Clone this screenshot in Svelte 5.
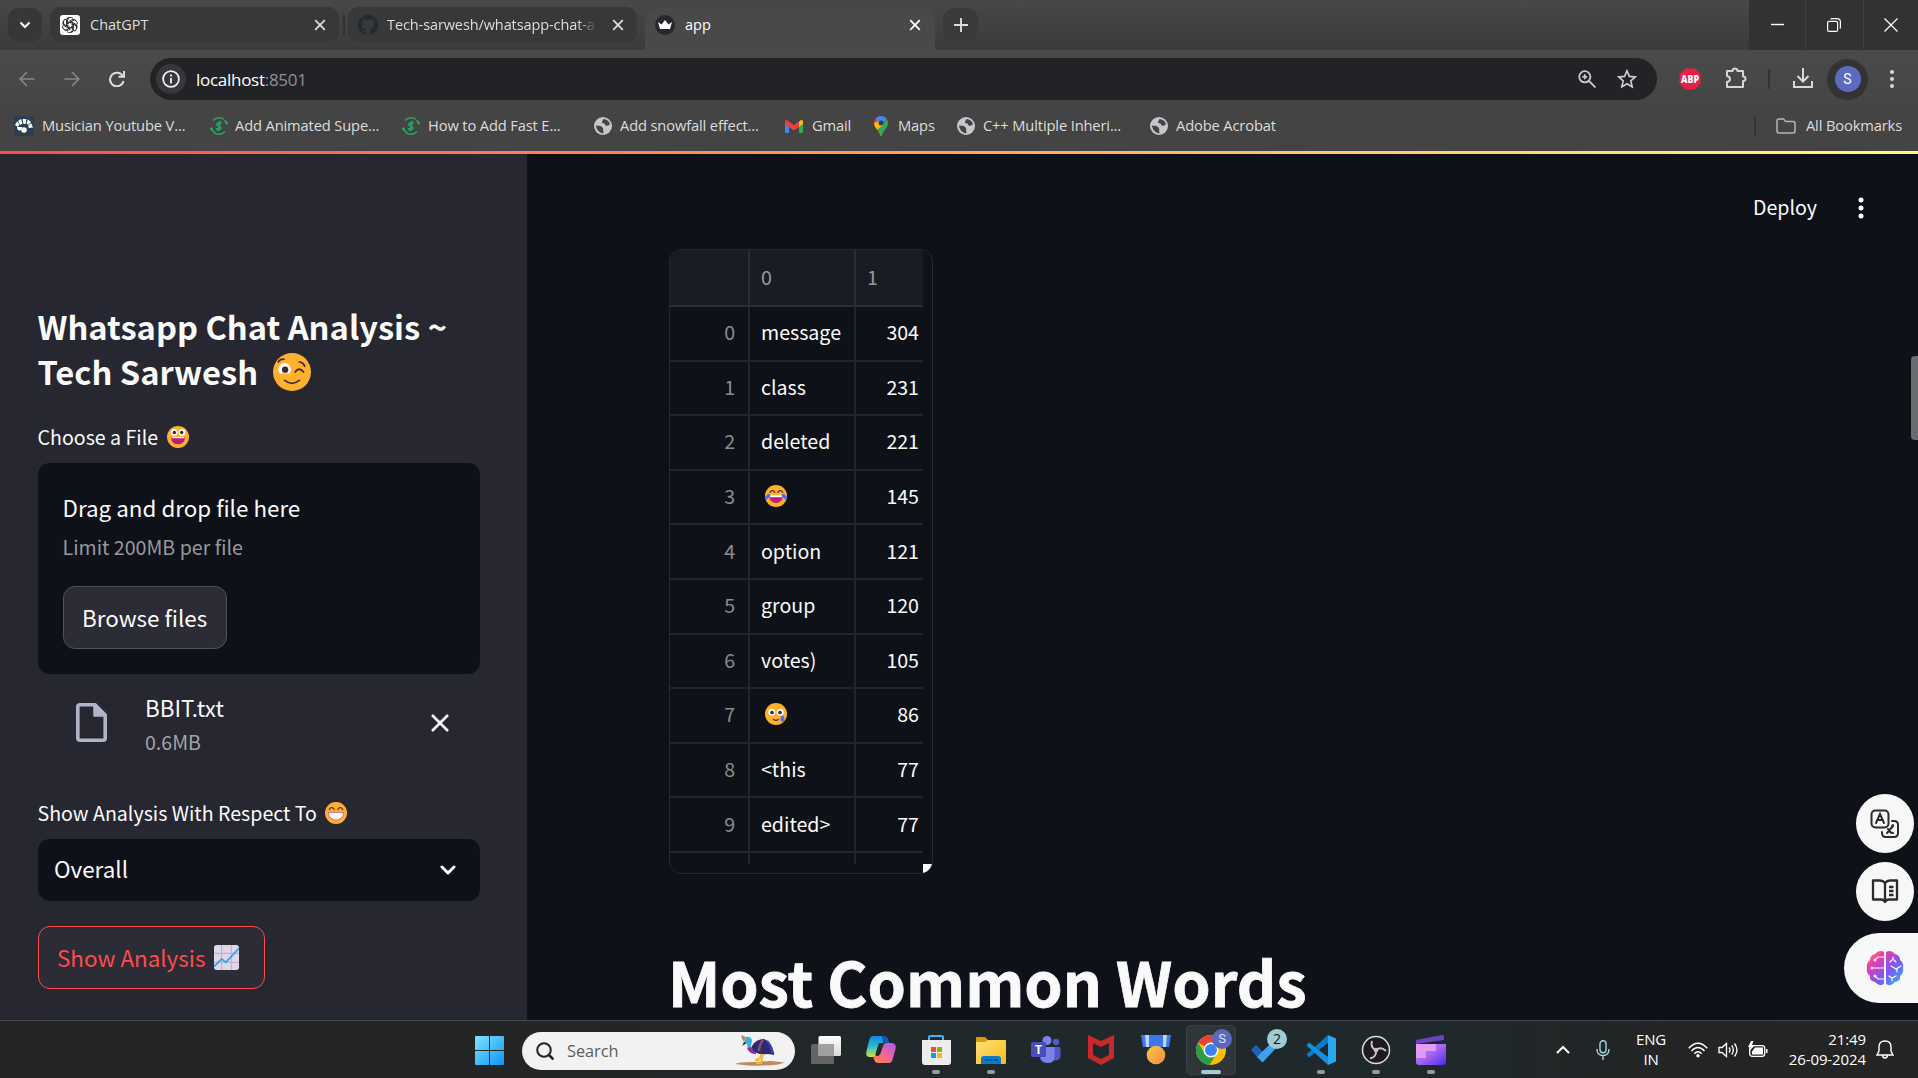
<script>
  const bookmarks = [
    { icon: 'piano', label: 'Musician Youtube V...', width: 195, gap: 8 },
    { icon: 'scurve', label: 'Add Animated Supe...', width: 192, gap: 6 },
    { icon: 'scurve', label: 'How to Add Fast E...', width: 192, gap: 7 },
    { icon: 'globe', label: 'Add snowfall effect...', width: 191, gap: 7 },
    { icon: 'gmail', label: 'Gmail', width: 87, gap: 8 },
    { icon: 'maps', label: 'Maps', width: 85, gap: 7 },
    { icon: 'globe', label: 'C++ Multiple Inheri...', width: 193, gap: 7 },
    { icon: 'globe', label: 'Adobe Acrobat', width: 200, gap: 7 }
  ];
  const rows = [
    ['message', 304],
    ['class', 231],
    ['deleted', 221],
    ['joy', 145],
    ['option', 121],
    ['group', 120],
    ['votes)', 105],
    ['tear', 86],
    ['<this', 77],
    ['edited>', 77]
  ];
  const pinned = ['taskview', 'copilot', 'store', 'folder', 'teams', 'mcafee', 'medal', 'chrome', 'todo', 'vscode', 'obs', 'clipchamp'];
  const running = ['store', 'folder', 'vscode', 'obs', 'clipchamp'];
</script>

{#snippet closeIcon()}
  <svg width="12" height="12" viewBox="0 0 12 12" fill="none" stroke="currentColor" stroke-width="1.800"><path d="M1.200 1.200l9.600 9.600M10.800 1.200l-9.600 9.600" /></svg>
{/snippet}

{#snippet emoji(kind, size)}
  <svg class="emoji" width={size} height={size} viewBox="0 0 36 36" role="img" aria-label={kind}>
    {#if kind === 'chart'}
      <rect width="36" height="36" rx="4" fill="#e0d7ea" />
      <path d="M11 0v36M25 0v36M0 12h36M0 25h36" stroke="#b9acc6" stroke-width="1.400" />
      <path d="M0 31L11 20l6 5L36 5" fill="none" stroke="#39a2ec" stroke-width="2.600" />
    {:else}
      <circle cx="18" cy="18" r="18" fill="#ffb02e" />
      {#if kind === 'wink'}
        <circle cx="11" cy="15.500" r="6" fill="#fff" />
        <circle cx="11.500" cy="15.800" r="3" fill="#402a32" />
        <path d="M5 20.500q6-2.500 12 0v2H5z" fill="#ffb02e" />
        <path d="M5 8.500q2-3 5.500-2.600M25 8.500q4 .5 5 4M21 18q3.500-5.500 8 0M11 26q7 5.500 14 0" fill="none" stroke="#402a32" stroke-width="1.600" stroke-linecap="round" />
      {:else if kind === 'grin'}
        <circle cx="11.500" cy="10.500" r="5.500" fill="#fff" /><circle cx="24.500" cy="10.500" r="5.500" fill="#fff" />
        <circle cx="12" cy="10.500" r="2.800" fill="#402a32" /><circle cx="24" cy="10.500" r="2.800" fill="#402a32" />
        <path d="M7 18h22v3a11 9 0 0 1-22 0z" fill="#bb1d80" /><path d="M8 18h20v2H8z" fill="#fff" />
      {:else if kind === 'beam'}
        <path d="M7 12q4-6 8 0M21 12q4-6 8 0" fill="none" stroke="#402a32" stroke-width="2" stroke-linecap="round" />
        <path d="M6 17h24v2.500a12 10 0 0 1-24 0z" fill="#fff" /><path d="M6 17h24v2.500a12 10 0 0 1-24 0z" fill="none" stroke="#c2458f" stroke-width="1.200" />
      {:else if kind === 'joy'}
        <path d="M8 12q4-6 8 0M21 12q4-6 8 0" fill="none" stroke="#402a32" stroke-width="2" stroke-linecap="round" />
        <path d="M7 18h22v2a11 9.500 0 0 1-22 0z" fill="#bb1d80" /><path d="M8 17h20v3H8z" fill="#fff" />
        <path d="M6 17L2 21M30 17l4 4" stroke="#4a6bf5" stroke-width="5" stroke-linecap="round" />
      {:else if kind === 'tear'}
        <circle cx="11" cy="15" r="5.500" fill="#fff" /><circle cx="25" cy="15" r="5.500" fill="#fff" />
        <circle cx="11.500" cy="15.500" r="3" fill="#402a32" /><circle cx="24.500" cy="15.500" r="3" fill="#402a32" />
        <path d="M14 27q4 3 8 0" fill="none" stroke="#402a32" stroke-width="2" stroke-linecap="round" />
        <rect x="25.500" y="21" width="6" height="10" rx="3" fill="#4a6bf5" />
      {/if}
    {/if}
  </svg>
{/snippet}

{#snippet markIcon(kind)}
  <svg width="20" height="20" viewBox="0 0 20 20">
    {#if kind === 'piano'}
      <rect width="20" height="20" rx="1.500" fill="#2a4052" />
      <path d="M1 9L3 5.500 5.500 8 4 11zM4 5l3-2 1.500 4.500L6.500 9zM8.500 3h4l-1 5h-2zM14 3.500l3 2.500-3 3-1.500-2zM17 7l2 4.500-4 .5-1-2zM3 11q0 4 3.500 3.500L8.500 11z" fill="#fff" /><circle cx="10" cy="14" r="2.800" fill="#fff" />
    {:else if kind === 'scurve'}
      <path d="M15 3.500A8.300 8.300 0 0 0 4 4.500M2 12A8.300 8.300 0 0 0 6 17M5.500 17A8.300 8.300 0 0 0 16 15.500M18 8A8.300 8.300 0 0 0 15.500 4" fill="none" stroke="#23a566" stroke-width="1.500" />
      <path d="M12.600 7.800q-1.800-2-4-.8-1.800 1.700.8 2.900 3.400 1.200 1.900 3.100-2 1.500-4.300-.5M11 4.800l-2 10.500" fill="none" stroke="#23a566" stroke-width="1.700" />
      <circle cx="17.500" cy="7" r="1.500" fill="#23a566" /><circle cx="2.500" cy="13" r="1.500" fill="#23a566" />
    {:else if kind === 'globe'}
      <circle cx="10" cy="10" r="9" fill="#c4c7cc" />
      <path d="M10.500 3q5 .5 6.500 5-1.500 2.500-4.500 1.500l-1-2-2.500-.5.3-2zM2.800 9.500l5 .5 2.200 2 .5 5.500q-6-.5-7.700-8" fill="#444" />
    {:else if kind === 'gmail'}
      <path d="M1 5v12h4V9z" fill="#4285f4" /><path d="M19 5v12h-4V9z" fill="#34a853" /><path d="M15 5.500L17 4q2-.5 2 2v2l-4 3z" fill="#fbbc04" />
      <path d="M5 5.500L3 4Q1 3.500 1 6v2l4 3 5 3.600 5-3.600V5.500l-5 3.800z" fill="#ea4335" />
    {:else if kind === 'maps'}
      <path d="M10 0a7 7 0 0 0-7 7q0 3 2.500 5.500L10 7z" fill="#ea4335" /><path d="M10 0a7 7 0 0 1 6 3.500L10 9 5 2.300A7 7 0 0 1 10 0" fill="#4285f4" />
      <path d="M16 3.500q2 3.500 0 7.500-4 4.500-5.200 9h-1.500q-.8-3-3.300-6.500z" fill="#34a853" /><path d="M3 7q0 3.500 3 6.700L12.500 9 8 5z" fill="#fbbc04" /><circle cx="10" cy="7" r="2.500" fill="#343b57" />
    {/if}
  </svg>
{/snippet}

{#snippet taskIcon(kind)}
  <svg width="32" height="32" viewBox="0 0 32 32">
    {#if kind === 'taskview'}
      <rect x="1" y="10" width="23" height="20" rx="1.500" fill="#646464" /><rect x="8.500" y="2" width="22.500" height="20" rx="1.500" fill="url(#tvw)" /><rect x="8.500" y="10" width="15.500" height="12" fill="#a0a0a0" />
    {:else if kind === 'copilot'}
      <path d="M8 2h11q3 0 4 4l1 3h-4q-3 0-4 3l-3 7q-1 4-4 4H5q-5 0-3.500-6L4 7q1-5 4-5" fill="url(#cpa)" />
      <path d="M24 29H13q-3 0-4-4l-1-3h4q3 0 4-4l2-6q1-3 4-3h5q5 1 3.500 6L28 24q-1 5-4 5" fill="url(#cpb)" />
      <path d="M17 2h2q3 0 4 4l1 3h-6z" fill="#1655b8" /><path d="M14 9h6q-3 0-4 3l-3 10h-2q-1-1 0-4z" fill="#20282b" />
    {:else if kind === 'store'}
      <path d="M9 7V3q0-1 1-1h12q1 0 1 1v4" fill="none" stroke="#39b9ed" stroke-width="2" />
      <path d="M2 6h29v22q0 3-3 3H5q-3 0-3-3z" fill="#ececec" />
      <path d="M11 13h5v5h-5z" fill="#f25022" /><path d="M17 13h5v5h-5z" fill="#7fba00" /><path d="M11 19h5v5h-5z" fill="#00a4ef" /><path d="M17 19h5v5h-5z" fill="#ffb900" />
    {:else if kind === 'folder'}
      <path d="M1 4q0-1 1-1h8l3 3h3v5H1z" fill="#dd9a0a" /><path d="M1 8h9l3-2h17q1 0 1 1v22q0 1-1 1H1z" fill="url(#fol)" />
      <path d="M6 30v-5q0-3 3-3h14q3 0 3 3v5z" fill="#0c7bc8" /><path d="M10 26h13" stroke="#074b86" stroke-width="1.500" />
    {:else if kind === 'teams'}
      <circle cx="17" cy="6.500" r="4.500" fill="#7b83eb" /><circle cx="26" cy="8" r="3.200" fill="#5059c9" />
      <path d="M20 13h9q1.500 0 1.500 1.500v7q0 5-5.500 5-3 0-5-3z" fill="#5059c9" /><path d="M10 13h14.500v10q0 6-7 6-7.500 0-7.500-7z" fill="#7b83eb" />
      <rect x="1" y="8" width="15" height="15" rx="1.500" fill="#464eb8" /><text x="8.500" y="20" text-anchor="middle" font-family="Open Sans, sans-serif" font-size="12" font-weight="700" fill="#fff">T</text>
    {:else if kind === 'mcafee'}
      <path d="M3 1l13 6 13-6v23l-13 7-13-7zM8 9v12l8 4 8-4V9l-8 4z" fill="#c9292c" fill-rule="evenodd" />
    {:else if kind === 'medal'}
      <path d="M1 1h30l-2 12H3z" fill="#3f76ee" /><path d="M5 1h4v12H6zM23 1h4l-1 12h-3z" fill="#b5d8ff" /><circle cx="16" cy="21" r="9.300" fill="url(#med)" />
    {:else if kind === 'chrome'}
      <circle cx="16" cy="16" r="15" fill="#fbbc04" /><path d="M16 16L3 8.500A15 15 0 0 1 29 8.500H16z" fill="#ea4335" /><path d="M3 8.500A15 15 0 0 0 14.500 31L22 19l-6 4-6-3z" fill="#2c9e4b" /><circle cx="16" cy="16" r="7.500" fill="#fff" /><circle cx="16" cy="16" r="6" fill="#3b82f6" />
    {:else if kind === 'todo'}
      <path d="M1 16l5-5 7 7-5 6z" fill="#1f5fc4" /><path d="M7 23L26 4l5 5-18.500 19.500z" fill="#3ea0ef" />
    {:else if kind === 'vscode'}
      <path d="M23 1l8 3.500v23L23 31z" fill="#2aa7ef" /><path d="M23 1L1.500 20.500 4 23.500 23 9z" fill="#0b7bc6" /><path d="M23 31L1.500 11.500 4 8.500 23 23z" fill="#1490df" />
    {:else if kind === 'obs'}
      <circle cx="16" cy="16" r="13.500" fill="#1d1b1e" stroke="#dedede" stroke-width="1.500" />
      <path d="M16 16q-6-2-4-9M16 16q5-4 10 1M16 16q1 7-6 8.500" fill="none" stroke="#c5c3c5" stroke-width="2" /><circle cx="16" cy="16" r="2.300" fill="#c5c3c5" />
    {:else if kind === 'clipchamp'}
      <path d="M1 6l26-5q2 0 2 2v3L1 10z" fill="#6a43c7" /><path d="M1 10h30v18q0 3-3 3H4q-3 0-3-3z" fill="url(#clip)" /><path d="M1 10h20v7H1z" fill="#e69bf3" /><path d="M1 17h10v7H1z" fill="#dc9af4" />
    {/if}
  </svg>
{/snippet}

<svg class="defs" width="0" height="0" aria-hidden="true">
  <defs>
    <linearGradient id="tvw" x2="0" y2="1"><stop stop-color="#fff" /><stop offset="1" stop-color="#d8d8d8" /></linearGradient>
    <linearGradient id="cpa" x2="0" y2="1"><stop stop-color="#1683dd" /><stop offset=".5" stop-color="#27bfd0" /><stop offset="1" stop-color="#d6dd33" /></linearGradient>
    <linearGradient id="cpb" x1="1" x2="0" y2="1"><stop stop-color="#a45cf0" /><stop offset=".5" stop-color="#f0639d" /><stop offset="1" stop-color="#ff8a35" /></linearGradient>
    <linearGradient id="fol" x2="1" y2="1"><stop stop-color="#ffe27a" /><stop offset="1" stop-color="#fbb917" /></linearGradient>
    <linearGradient id="med" x2="1" y2="1"><stop stop-color="#ffc83d" /><stop offset="1" stop-color="#f28a4b" /></linearGradient>
    <linearGradient id="clip" x2="1" y2="1"><stop stop-color="#d084f1" /><stop offset=".5" stop-color="#a565ee" /><stop offset="1" stop-color="#4b2bea" /></linearGradient>
    <linearGradient id="win" x2="1" y2="1"><stop stop-color="#7be6ff" /><stop offset="1" stop-color="#0f94f5" /></linearGradient>
    <linearGradient id="brain" x2="1" y2="1"><stop stop-color="#ffae19" /><stop offset=".25" stop-color="#f536ae" /><stop offset=".6" stop-color="#7759f3" /><stop offset="1" stop-color="#2db9fb" /></linearGradient>
  </defs>
</svg>

<div class="screen">
  <div class="tabstrip">
    <div class="tabsearch"><svg width="12" height="12" viewBox="0 0 12 12" fill="none" stroke="#fff" stroke-width="2.200"><path d="M1.500 3.500L6 8l4.500-4.500" /></svg></div>
    <div class="tab first">
      <svg width="20" height="20" viewBox="0 0 20 20"><rect width="20" height="20" rx="3" fill="#fff" />
        <g fill="none" stroke="#222" stroke-width=".9">{#each [0, 60, 120, 180, 240, 300] as a}<path d="M7.500 9.500V5.500a3.200 3.200 0 0 1 5.600-2M8.400 9.200V6.800l3.500-2q2.800-1.300 4.300 1" transform="rotate({a} 10 10)" />{/each}</g></svg>
      <span class="title">ChatGPT</span><span class="x">{@render closeIcon()}</span>
    </div>
    <div class="tabsep"></div>
    <div class="tab second">
      <svg width="20" height="20" viewBox="0 0 16 16"><path fill="#22292f" d="M8 0C3.580 0 0 3.580 0 8c0 3.540 2.290 6.530 5.470 7.590.4.070.55-.17.55-.38v-1.490c-2.010.37-2.530-.49-2.690-.94-.09-.23-.48-.94-.82-1.130-.28-.15-.68-.52-.01-.53.63-.01 1.080.58 1.230.82.72 1.210 1.870.87 2.330.66.070-.52.28-.87.51-1.070-1.780-.2-3.640-.89-3.640-3.950 0-.87.31-1.590.82-2.150-.08-.2-.36-1.020.08-2.120 0 0 .67-.21 2.200.82a7.600 7.600 0 0 1 4 0c1.530-1.040 2.200-.82 2.200-.82.44 1.100.16 1.920.08 2.120.51.56.82 1.270.82 2.150 0 3.070-1.870 3.750-3.650 3.950.29.25.54.73.54 1.480v2.190c0 .21.150.46.55.38A8 8 0 0 0 8 0z" /></svg>
      <span class="title fade">Tech-sarwesh/whatsapp-chat-an</span><span class="x">{@render closeIcon()}</span>
    </div>
    <div class="tab active">
      <svg width="20" height="20" viewBox="0 0 20 20"><circle cx="10" cy="10" r="10" fill="#262730" /><path d="M3 7l3.500 2.500L10 5l3.500 4.500L17 7l-2 7H5z" fill="#fff" /></svg>
      <span class="title">app</span><span class="x">{@render closeIcon()}</span>
    </div>
    <div class="newtab"><svg width="14" height="14" viewBox="0 0 14 14" stroke="#ddd" stroke-width="1.900"><path d="M7 0v14M0 7h14" /></svg></div>
    <div class="winbtns">
      <div><svg width="14" height="14" viewBox="0 0 14 14" stroke="#fff" stroke-width="1.400"><path d="M1 6.500h13" /></svg></div>
      <div><svg width="14" height="14" viewBox="0 0 14 14" fill="none" stroke="#fff" stroke-width="1.200"><rect x=".6" y="3.400" width="10" height="10" rx="1.500" /><path d="M3.500 1Q4 .6 5 .6h5q3.400 0 3.400 3.400v5q0 1-.5 1.500" /></svg></div>
      <div><svg width="14" height="14" viewBox="0 0 14 14" stroke="#fff" stroke-width="1.200"><path d="M.5.5l13 13M13.500.5l-13 13" /></svg></div>
    </div>
  </div>

  <div class="toolbar">
    <div class="nav">
      <svg width="16" height="16" viewBox="0 0 16 16" fill="none" stroke="#868686" stroke-width="1.700"><path d="M15.500 8H1.500M8 1L1.200 8 8 15" /></svg>
      <svg width="16" height="16" viewBox="0 0 16 16" fill="none" stroke="#868686" stroke-width="1.700"><path d="M.5 8h14M8 1l6.800 7L8 15" /></svg>
      <svg width="16" height="16" viewBox="0 0 16 16" fill="none" stroke="#ddd" stroke-width="2"><path d="M14 5.500A6.800 6.800 0 1 0 14.500 10M15 0v5.700H9.500" /></svg>
    </div>
    <div class="omnibox">
      <div class="info"><svg width="18" height="18" viewBox="0 0 18 18" fill="none" stroke="#eee" stroke-width="1.800"><circle cx="9" cy="9" r="7.900" /><path d="M9 8v5.500M9 4.500v2" /></svg></div>
      <span class="url">localhost<i>:8501</i></span>
      <svg class="lens" width="18" height="18" viewBox="0 0 18 18" fill="none" stroke="#c8cacc" stroke-width="1.800"><circle cx="6.800" cy="6.800" r="5.600" /><path d="M11 11l6.500 6.500M6.800 4.300v5M4.300 6.800h5" /></svg>
      <svg width="20" height="20" viewBox="0 0 20 20" fill="none" stroke="#d0d2d4" stroke-width="1.600"><path d="M10 1.800l2.400 5.600 6 .5-4.600 4 1.400 6L10 14.700 4.800 17.900l1.400-6-4.600-4 6-.5z" /></svg>
    </div>
    <div class="abp"><svg width="22" height="22" viewBox="0 0 22 22"><path d="M6.500.5h9l6 6v9l-6 6h-9l-6-6v-9z" fill="#ed1e45" /><text x="11" y="15" text-anchor="middle" font-family="Open Sans, sans-serif" font-size="10.500" font-weight="800" fill="#fff" textLength="18" lengthAdjust="spacingAndGlyphs">ABP</text></svg></div>
    <svg class="puzzle" width="22" height="22" viewBox="0 0 22 22" fill="none" stroke="#d5d5d5" stroke-width="2" stroke-linejoin="round"><path d="M2 4h5.500q0-2.500 2.500-2.500T12.500 4H18v5.500q2.500 0 2.500 2.300T18 14v6H2v-5q3-.5 3-3t-3-3z" /></svg>
    <div class="tsep"></div>
    <svg class="dl" width="20" height="20" viewBox="0 0 20 20" fill="none" stroke="#d8d8d8" stroke-width="2"><path d="M10 0v13M4.500 8l5.500 5.500L15.500 8M1 13v6h18v-6" /></svg>
    <div class="profile"><span>S</span></div>
    <svg class="kebab" width="4" height="18" viewBox="0 0 4 18" fill="#d8d8d8"><circle cx="2" cy="2" r="2" /><circle cx="2" cy="9" r="2" /><circle cx="2" cy="16" r="2" /></svg>
  </div>

  <div class="bookmarks">
    {#each bookmarks as b}
      <div class="bm" style="width:{b.width}px;gap:{b.gap}px">{@render markIcon(b.icon)}<span>{b.label}</span></div>
    {/each}
    <div class="allbm">
      <svg width="20" height="16" viewBox="0 0 20 16" fill="none" stroke="#b5b5b5" stroke-width="1.500"><path d="M1 3q0-2 2-2h4.500l2.300 2.500H17q2 0 2 2V13q0 2-2 2H3q-2 0-2-2z" /></svg>
      <span>All Bookmarks</span>
    </div>
  </div>

  <div class="rainbow"></div>

  <div class="page">
    <aside>
      <h1>Whatsapp Chat Analysis ~<br />Tech Sarwesh {@render emoji('wink', 38)}</h1>
      <div class="label one">Choose a File {@render emoji('grin', 22)}</div>
      <div class="uploader">
        <div class="drag">Drag and drop file here</div>
        <div class="limit">Limit 200MB per file</div>
        <button class="browse">Browse files</button>
      </div>
      <div class="file">
        <svg class="doc" width="31" height="39" viewBox="0 0 31 39" fill="none" stroke="#b0b4c8" stroke-width="3.600" stroke-linejoin="round"><path d="M4 1.800h15L29.200 12v23q0 2.200-2.200 2.200H4q-2.200 0-2.200-2.200V4Q1.800 1.800 4 1.800z" /><path d="M18 2v11h11z" fill="#b0b4c8" stroke-width="1.500" /></svg>
        <div class="fmeta"><div class="fname">BBIT.txt</div><div class="fsize">0.6MB</div></div>
        <svg width="18" height="18" viewBox="0 0 18 18" stroke="#fff" stroke-width="2.500"><path d="M1 1l16 16M17 1L1 17" /></svg>
      </div>
      <div class="label two">Show Analysis With Respect To {@render emoji('beam', 22)}</div>
      <div class="select"><span>Overall</span><svg width="16" height="11" viewBox="0 0 16 11" fill="none" stroke="#fff" stroke-width="3" stroke-linecap="round" stroke-linejoin="round"><path d="M2 2l6 6 6-6" /></svg></div>
      <button class="show"><span>Show Analysis</span>{@render emoji('chart', 25)}</button>
    </aside>

    <main>
      <header><span>Deploy</span><svg width="6" height="22" viewBox="0 0 6 22" fill="#fff"><circle cx="3" cy="3" r="2.500" /><circle cx="3" cy="11" r="2.500" /><circle cx="3" cy="19" r="2.500" /></svg></header>
      <div class="table">
        <div class="cells">
          <div class="row head"><div></div><div>0</div><div>1</div></div>
          {#each rows as [word, count], i}
            <div class="row">
              <div class="idx">{i}</div>
              <div class="word">{#if word === 'joy' || word === 'tear'}{@render emoji(word, 22)}{:else}{word}{/if}</div>
              <div class="num">{count}</div>
            </div>
          {/each}
          <div class="row rest"><div></div><div></div><div></div></div>
        </div>
        <div class="corner"></div>
      </div>
      <h2>Most Common Words</h2>

      <div class="scroll"></div>
      <div class="floats">
        <div class="round"><svg width="30" height="30" viewBox="0 0 30 30" fill="none" stroke="#2b2b2b" stroke-width="2" stroke-linecap="round"><rect x="1.500" y="1.500" width="17" height="17" rx="4" /><path d="M6 14l4-9 4 9M7.500 11h5M22 12h2q4 0 4 4v8q0 4-4 4h-8q-4 0-4-4v-1M17 24l6-7M18 20q2 4 5 4M22 17l1-1" /></svg></div>
        <div class="round"><svg width="28" height="26" viewBox="0 0 28 26" fill="none" stroke="#2b2b2b" stroke-width="2.300" stroke-linejoin="round"><path d="M14 4q-2-2.500-5-2.500H2v19h8q3 0 4 2.500 1-2.500 4-2.500h8v-19h-7Q16 1.500 14 4v18M18 8h4.500M18 12h4.500M18 16h4.500" /></svg></div>
        <div class="pill"><svg width="38" height="36" viewBox="0 0 38 36"><path d="M18 2v32q-5 3-9-2-6-1-5-6-4-3-3-8-1-5 3-8 0-5 5-6 4-5 9-2zM20 2v32q5 3 9-2 6-1 5-6 4-3 3-8 1-5-3-8 0-5-5-6-4-5-9-2z" fill="url(#brain)" /><path d="M18 7h-6l-3 3M18 18H6M18 29h-6l-3-3M24 12l3-3 3 3M27 9V7M25 16l5 3 5-3M31 19v3M23 26l3 2 4-2M26 28v3" fill="none" stroke="#fff" stroke-width="1.200" stroke-linecap="round" /><circle cx="9" cy="10" r="1.500" fill="#fff" /><circle cx="6" cy="18" r="1.500" fill="#fff" /><circle cx="9" cy="26" r="1.500" fill="#fff" /></svg></div>
      </div>
    </main>
  </div>

  <div class="taskbar">
    <svg class="start" width="29" height="29" viewBox="0 0 29 29" fill="url(#win)"><path d="M1 0h13v14H0V1q0-1 1-1zM15 0h13q1 0 1 1v13H15zM0 15h14v14H1q-1 0-1-1zM15 15h14v13q0 1-1 1H15z" /></svg>
    <div class="search">
      <svg width="18" height="18" viewBox="0 0 18 18" fill="none" stroke="#222" stroke-width="2"><circle cx="8" cy="8" r="6.800" /><path d="M13 13l4.500 4.500" stroke-width="2.600" /></svg>
      <span>Search</span>
      <svg width="50" height="31" viewBox="0 0 50 31">
        <path d="M0 29q3-2 18-2l18-1 14 1.500-7 2q-12 1.500-30 1z" fill="#c1895c" />
        <path d="M14 12q2 5 7 5" fill="none" stroke="#9a2f9c" stroke-width="4.500" />
        <path d="M11 2q4-1 6 3 0 4-2 8l-3-2q1-4-3-3z" fill="#33b4dc" />
        <path d="M6 0l5 2-2 5-2-3z" fill="#b98a66" /><path d="M7 11l2-4 3 1z" fill="#2c3450" />
        <path d="M17 11q4-7 12-7 8 3 10 14v2q-3-1-7-1-8 1-12-2-4-3-3-6z" fill="#2c2a72" />
        <path d="M28 5q-4 5-4 11" stroke="#8c4c66" stroke-width="2.500" fill="none" /><path d="M32 6q4 4 5 12" stroke="#2f46c0" stroke-width="2" fill="none" />
        <path d="M26 19l-1 4-4 2M28 19l-2 9M21 28h6M20 25h4" fill="none" stroke="#f1b72c" stroke-width="1.800" />
      </svg>
    </div>
    <div class="apps">
      {#each pinned as p}
        <div class="app" class:current={p === 'chrome'}>
          {@render taskIcon(p)}
          {#if running.includes(p)}<i class="dot"></i>{/if}
          {#if p === 'chrome'}<i class="dot wide"></i><b class="badge s">S</b>{/if}
          {#if p === 'todo'}<b class="badge">2</b>{/if}
        </div>
      {/each}
    </div>
    <div class="tray">
      <svg class="up" width="14" height="9" viewBox="0 0 14 9" fill="none" stroke="#fff" stroke-width="2"><path d="M1 8l6-6 6 6" /></svg>
      <svg class="mic" width="14" height="20" viewBox="0 0 14 20" fill="none" stroke="#a5d4de" stroke-width="1.400"><rect x="4" y=".8" width="6" height="12" rx="3" /><path d="M1 9q0 6.500 6 6.500T13 9M7 15.500V20" /></svg>
      <div class="lang">ENG<br />IN</div>
      <svg class="wifi" width="20" height="16" viewBox="0 0 20 16" fill="none" stroke="#fff" stroke-width="1.400"><path d="M.7 6.200q9.300-10 18.600 0M3.500 9q6.500-7 13 0M6.300 11.800q3.700-4 7.400 0" /><circle cx="10" cy="13.700" r="1.700" fill="#fff" stroke="none" /></svg>
      <svg class="vol" width="21" height="16" viewBox="0 0 21 16" fill="none" stroke="#fff" stroke-width="1.300"><path d="M1 5.500h3L8.500 1.500v13L4 10.500H1zM11 5.500q2 2.500 0 5M13.700 3.500q3.300 4.500 0 9M16.500 1.500q5 6.500 0 13" /></svg>
      <svg class="bat" width="20" height="17" viewBox="0 0 20 17"><rect x="1.700" y="4.700" width="15" height="10.600" rx="2.500" fill="none" stroke="#fff" stroke-width="1.300" /><path d="M7 6.500h8v7H4v-3zM18 8h1.500v4H18zM3 0L0 6h2.500L1.500 10 7 4H4l1.500-4z" fill="#fff" /></svg>
      <div class="clock">21:49<br />26-09-2024</div>
      <svg class="bell" width="18" height="19" viewBox="0 0 18 19" fill="none" stroke="#fff" stroke-width="1.400"><path d="M9 1q6 0 6 6v4l2 4H1l2-4V7q0-6 6-6zM6.500 15.500q.5 2.500 2.500 2.500t2.500-2.500" /></svg>
    </div>
  </div>
</div>

<style>
  :global(body) { background: #0e1117; overflow: hidden; }
  .defs { position: absolute; }
  .screen { width: 1918px; height: 1078px; overflow: hidden; display: flex; flex-direction: column; font-family: 'Open Sans', 'Noto Sans', sans-serif; color: #ddd; }
  .screen * { box-sizing: border-box; }
  svg { display: block; flex: none; }

  .tabstrip { height: 50px; flex: none; display: flex; align-items: flex-start; padding-left: 8px; background: linear-gradient(#484848, #3b3b3b); font-size: 14.500px; }
  .tabsearch { width: 34px; height: 34px; margin: 8px 8px 0 0; border-radius: 11px; background: #373737; display: grid; place-items: center; }
  .tab { display: flex; align-items: center; height: 35px; margin-top: 7px; border-radius: 11px; background: #383838; }
  .tab.first { width: 289px; padding: 0 13px 0 10px; }
  .tab.second { width: 289px; padding: 0 13px 0 10px; }
  .tab.active { width: 290px; height: 42px; margin: 8px 0 0 8px; padding: 0 14px 8px 10px; border-radius: 12px 12px 0 0; background: #494949; color: #fff; }
  .title { flex: 1; margin-left: 10px; white-space: nowrap; overflow: hidden; line-height: 24px; }
  .fade { margin: 0 9px 0 9px; letter-spacing: -.1px; -webkit-mask-image: linear-gradient(90deg, #000 88%, transparent 97%); mask-image: linear-gradient(90deg, #000 88%, transparent 97%); }
  .tabsep { width: 2px; height: 20px; margin: 15px 3px 0 4px; background: #303030; }
  .newtab { width: 35px; height: 34px; margin: 8px 0 0 8px; border-radius: 12px; background: #3a3a3a; display: grid; place-items: center; }
  .winbtns { margin-left: auto; display: flex; height: 50px; background: #323232; }
  .winbtns div { width: 58px; border-right: 1px solid #3f3f3f; display: grid; place-items: center; padding-right: 1px; }
  .winbtns div:first-child { width: 57px; padding-right: 0; }
  .winbtns div:last-child { width: 54px; border: 0; padding: 0; }

  .toolbar { height: 58px; flex: none; display: flex; align-items: center; background: linear-gradient(#4a4a4a, #454545); }
  .nav { display: flex; gap: 29px; padding-left: 19px; width: 150px; }
  .omnibox { width: 1507px; height: 42px; border-radius: 21px; background: #222327; display: flex; align-items: center; padding: 0 20px 0 6px; }
  .info { width: 30px; height: 30px; border-radius: 50%; background: #37383b; display: grid; place-items: center; }
  .url { flex: 1; margin-left: 10px; color: #fff; font-size: 17px; letter-spacing: -.28px; }
  .url i { font-style: normal; color: #8e9195; }
  .lens { margin-right: 21px; }
  .abp { margin-left: 22px; }
  .puzzle { margin-left: 24px; margin-top: -3px; }
  .tsep { width: 2px; height: 20px; margin-left: 21px; background: #343434; }
  .dl { margin-left: 23px; margin-top: -2px; }
  .profile { width: 41px; height: 41px; margin-left: 14px; border-radius: 50%; background: #333; display: grid; place-items: center; }
  .profile span { width: 26px; height: 26px; border-radius: 50%; background: #5c6bc0; color: #fff; font: 14px/26px Roboto, sans-serif; text-align: center; }
  .kebab { margin-left: 22px; }

  .bookmarks { height: 43px; flex: none; display: flex; align-items: center; padding: 0 16px 7px 14px; background: #444; font-size: 14.700px; letter-spacing: -.14px; }
  .bm { display: flex; align-items: center; white-space: nowrap; color: #dcdcdc; }
  .bm span, .allbm span { margin-top: -2px; }
  .allbm { margin-left: auto; display: flex; align-items: center; gap: 10px; padding-left: 20px; height: 20px; border-left: 2px solid #363636; white-space: nowrap; }

  .rainbow { height: 3px; flex: none; background: linear-gradient(90deg, #ff4b4b, #fffd80); }
  .page { height: 866px; flex: none; display: flex; font-family: 'Noto Sans CJK SC', 'Noto Sans', sans-serif; color: #fafafa; }
  aside { width: 527px; padding: 149px 47px 0 37.500px; background: #262730; }
  h1 { margin: 0; font-size: 32.700px; line-height: 45px; font-weight: 600; white-space: nowrap; }
  .emoji { display: inline-block; }
  h1 .emoji { vertical-align: -6px; margin-left: 7px; }
  .label { font-size: 19.600px; line-height: 30px; height: 30px; white-space: nowrap; }
  .label .emoji { vertical-align: -3px; margin-left: 4px; }
  .one { margin-top: 29px; }
  .two { margin-top: 42px; }
  .uploader { height: 211px; margin: 11px 0 0 .5px; border-radius: 12px; padding: 25px 25px 0; background: #0e1117; }
  .drag { font-size: 22.400px; line-height: 38px; margin-left: -.5px; }
  .limit { margin: 5px 0 0 -.5px; font-size: 19.600px; line-height: 32px; color: #98999c; }
  button { display: flex; align-items: center; font: 22.400px/32px 'Noto Sans CJK SC', 'Noto Sans', sans-serif; color: #fafafa; background: #2b2c36; height: 63px; border-radius: 12px; white-space: nowrap; padding: 0 18px; }
  .browse { width: 164px; margin-top: 23px; padding-bottom: 2px; border: 1px solid #515259; }
  .show { width: 227px; margin: 25px 0 0 .5px; border: 1px solid #ff4b4b; color: #ff4b4b; gap: 9px; }
  .show span { margin-top: -2px; }
  .file { height: 66px; margin-top: 16px; padding: 0 31px 0 38.500px; display: flex; align-items: center; }
  .doc { margin-top: -2px; }
  .fmeta { flex: 1; margin: 3px 0 0 38px; }
  .fname { font-size: 22.400px; line-height: 34px; }
  .fsize { font-size: 19.600px; line-height: 34px; margin-top: 1px; color: #a2a3a7; }
  .select { height: 62px; margin: 11px 0 0 .5px; border-radius: 12px; background: #0e1117; padding: 0 24px 2px 16px; display: flex; align-items: center; justify-content: space-between; font-size: 22.400px; line-height: 34px; }
  .select span { margin-top: -3px; }
  .select svg { margin-top: 2px; }

  main { flex: 1; position: relative; background: #0e1117; padding-left: 142px; }
  header { height: 95px; padding: 13px 54px 0 0; display: flex; align-items: center; justify-content: flex-end; gap: 41px; font-size: 19.600px; }
  header span { margin-top: -3px; }
  .table { position: relative; width: 264px; height: 625px; border: 1px solid #25272c; border-radius: 12px; overflow: hidden; }
  .cells { width: 253px; height: 614px; overflow: hidden; font-size: 19.600px; line-height: 28px; }
  .row { display: grid; grid-template-columns: 80px 106px 1fr; height: 54.600px; }
  .row > div { display: flex; align-items: center; padding: 0 4px 2px 11px; border-bottom: 2px solid #232529; border-right: 2px solid #232429; }
  .row > div:last-child { border-right: 0; }
  .row .idx { justify-content: flex-end; padding-right: 13px; color: #8b8c90; }
  .row .num { justify-content: flex-end; }
  .row .emoji { margin-left: 4px; }
  .row.head { height: 57px; background: #1a1c23; color: #97989c; }
  .row.head > div { border-color: #2c2d34; }
  .corner { position: absolute; right: 0; bottom: 0; width: 9px; height: 9px; background: #fff; }
  h2 { margin: 67px 0 0 -1px; font-size: 61.400px; line-height: 80px; font-weight: 700; white-space: nowrap; -webkit-text-stroke: .8px #fafafa; }
  .scroll { position: absolute; right: 0; top: 202px; width: 7px; height: 84px; border-radius: 4px 0 0 4px; background: #6b6c70; }
  .floats { position: absolute; right: 0; top: 640px; width: 74px; display: flex; flex-direction: column; align-items: flex-end; }
  .round { width: 58px; height: 59px; margin: 0 4px 9px 0; border-radius: 50%; background: #f7f7f7; display: grid; place-items: center; }
  .pill { width: 74px; height: 70px; margin-top: 3px; border-radius: 35px 0 0 35px; background: #f8f8f8; display: flex; align-items: center; padding-left: 22px; }

  .taskbar { height: 58px; flex: none; display: flex; align-items: center; border-top: 1px solid #45484a; background: linear-gradient(90deg, #252525 0, #242525 25%, #20282b 50%, #1f282b 75%, #242424 88%, #252525); padding-left: 475px; }
  .start { margin-top: 2px; }
  .search { width: 273px; height: 38px; margin: 2px 0 0 18px; border-radius: 19px; background: #f2f2f2; display: flex; align-items: center; padding: 0 10px 0 14px; }
  .search span { flex: 1; margin-left: 13px; font-size: 16.300px; color: #5c5c5c; }
  .apps { display: flex; gap: 5px; margin: 1px 0 0 6px; }
  .app { position: relative; width: 50px; height: 50px; display: grid; place-items: center; border-radius: 5px; }
  .current { background: #2f3538; box-shadow: inset 0 0 0 1px #3a4043; }
  .dot { position: absolute; left: 21px; top: 45px; width: 8px; height: 4px; border-radius: 2px; background: #989b9c; }
  .wide { left: 15px; width: 20px; background: #a2cdd8; }
  .badge { position: absolute; left: 26px; top: 4px; width: 20px; height: 20px; border-radius: 50%; background: #a1cbd3; color: #111; font: 14px/20px 'Open Sans', sans-serif; text-align: center; }
  .badge.s { background: #5a68bd; color: #dfe3f5; font-family: Roboto, sans-serif; font-size: 13px; }
  .tray { margin-left: auto; display: flex; align-items: center; padding-right: 24px; color: #fff; font-size: 15px; line-height: 20px; }
  .mic { margin-left: 26px; }
  .lang { width: 40px; margin: -1px 0 0 21px; text-align: center; letter-spacing: -.2px; }
  .wifi { margin-left: 17px; }
  .vol { margin-left: 10px; }
  .bat { margin-left: 9px; }
  .clock { width: 98px; margin-top: -2px; text-align: right; letter-spacing: -.1px; }
  .bell { margin-left: 10px; }
</style>
